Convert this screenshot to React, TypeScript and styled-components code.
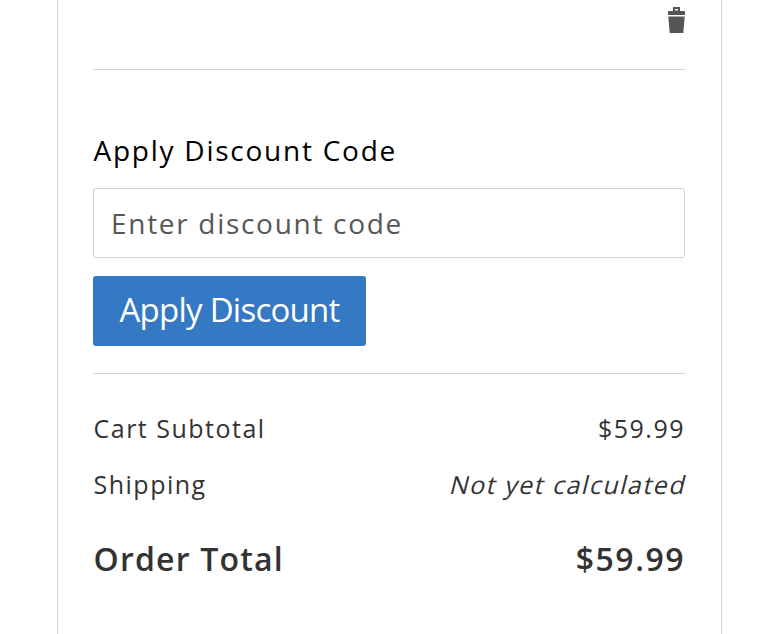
import React from 'react';
import styled, { createGlobalStyle } from 'styled-components';

const GlobalStyle = createGlobalStyle`
  *, *::before, *::after { box-sizing: border-box; }
  body { margin: 0; background: #fff; font-family: "Open Sans", sans-serif; color: #333; overflow: hidden; }
`;

const Panel = styled.main`
  width: 665px;
  height: 634px;
  margin-left: 57px;
  padding: 0 36px 0 35px;
  border: solid #d1d1d1;
  border-width: 0 1px;
`;

const ItemActions = styled.div`
  display: flex;
  justify-content: flex-end;
  height: 70px;
  padding-top: 7px;
  border-bottom: 1px solid #d1d1d1;
`;

const IconButton = styled.button`
  display: flex;
  width: 17px;
  height: 26px;
  padding: 0;
  border: 0;
  background: none;
  color: #555;
`;

const DiscountForm = styled.form`
  display: flex;
  flex-direction: column;
  align-items: flex-start;
  height: 304px;
  padding-top: 60px;
  border-bottom: 1px solid #d1d1d1;
`;

const Label = styled.label`
  height: 58px;
  padding-left: 0.5px;
  color: #000;
  font-size: 28px;
  line-height: 40px;
  letter-spacing: 1.75px;
  white-space: nowrap;
`;

const CodeInput = styled.input`
  width: 100%;
  height: 70px;
  padding: 0 17px;
  border: 1px solid #d1d1d1;
  border-radius: 3px;
  background: #fff;
  font: 28px "Open Sans", sans-serif;
  letter-spacing: 1.7px;
  outline: 0;
  &::placeholder { color: #575757; opacity: 1; }
`;

const ApplyButton = styled.button`
  width: 273px;
  height: 70px;
  margin-top: 18px;
  padding: 0 0 4px;
  border: 0;
  border-radius: 3px;
  background: #3578c3;
  color: #fff;
  font: 33px "Open Sans", sans-serif;
  letter-spacing: -0.75px;
  white-space: nowrap;
`;

const Totals = styled.section`
  padding: 26px 0 0 0.5px;
`;

const TotalRow = styled.div<{ $grand?: boolean }>`
  display: flex;
  justify-content: space-between;
  align-items: center;
  height: 56px;
  margin-top: ${(p) => (p.$grand ? '18px' : '0')};
  font-size: ${(p) => (p.$grand ? '32px' : '25px')};
  font-weight: ${(p) => (p.$grand ? 600 : 400)};
  letter-spacing: ${(p) => (p.$grand ? '1.2px' : '1.5px')};
  white-space: nowrap;
`;

const Slanted = styled.span`
  margin-right: -2px;
  transform: skewX(-14deg);
`;

const GrandAmount = styled.span`
  letter-spacing: 1.5px;
`;

const TrashIcon = () => (
  <svg width="17" height="26" viewBox="0 0 17 26" fill="currentColor" aria-hidden="true">
    <path fillRule="evenodd" d="M5 0h7v4h4q1 0 1 1v3H0V5q0-1 1-1h4zM7 2v1.5h3V2z" />
    <path d="M.3 9.6h16.4L15.3 26H1.7z" />
  </svg>
);

export default function App() {
  return (
    <>
      <GlobalStyle />
      <Panel>
        <ItemActions>
          <IconButton type="button" aria-label="Remove item"><TrashIcon /></IconButton>
        </ItemActions>
        <DiscountForm onSubmit={(e) => e.preventDefault()}>
          <Label htmlFor="discount">Apply Discount Code</Label>
          <CodeInput id="discount" placeholder="Enter discount code" />
          <ApplyButton type="submit">Apply Discount</ApplyButton>
        </DiscountForm>
        <Totals>
          <TotalRow><span>Cart Subtotal</span><span>$59.99</span></TotalRow>
          <TotalRow><span>Shipping</span><Slanted>Not yet calculated</Slanted></TotalRow>
          <TotalRow $grand><span>Order Total</span><GrandAmount>$59.99</GrandAmount></TotalRow>
        </Totals>
      </Panel>
    </>
  );
}
